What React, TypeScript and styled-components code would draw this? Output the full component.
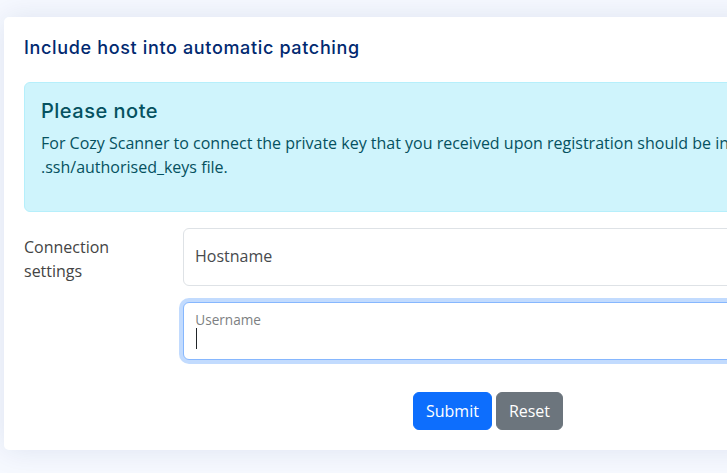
import { createGlobalStyle, styled } from "styled-components";

const GlobalStyle = createGlobalStyle`
  html, body {
    margin: 0;
    padding: 0;
    background: #f6f9ff;
    overflow: hidden;
  }
  body {
    font-family: "Open Sans", "Liberation Sans", sans-serif;
    color: #444444;
    font-size: 16px;
    line-height: 1.5;
  }
  * { box-sizing: border-box; }
`;

const Page = styled.main`
  padding: 17px 0 30px 4px;
`;

const Card = styled.section`
  width: 968px;
  background: #fff;
  border-radius: 5px;
  box-shadow: 0 0 30px rgba(1, 41, 112, 0.1);
  padding: 0 20px 20px;
`;

const CardTitle = styled.h5`
  margin: 0 0 8px;
  padding: 20px 0 15px;
  font-family: Inter, "Noto Sans", sans-serif;
  font-size: 18px;
  font-weight: 500;
  letter-spacing: 0.65px;
  line-height: 1.2;
  color: #012970;
`;

const Alert = styled.div`
  background: #cff4fc;
  border: 1px solid #b6effb;
  border-radius: 6px;
  color: #055160;
  padding: 16px;
  margin-bottom: 16px;
`;

const AlertHeading = styled.h4`
  margin: 0 0 8px;
  font-family: Inter, "Noto Sans", sans-serif;
  font-size: 20px;
  font-weight: 500;
  letter-spacing: 0.5px;
  line-height: 1.2;
`;

const AlertText = styled.p`
  margin: 0 0 16px;
  white-space: nowrap;
`;

const FormRow = styled.div`
  display: grid;
  grid-template-columns: 135px 1fr;
  column-gap: 24px;
  margin-bottom: 16px;
`;

const Label = styled.label`
  padding-top: 7px;
  line-height: 1.5;
  color: #444444;
`;

const Field = styled.div`
  position: relative;
`;

const Input = styled.input<{ $focused?: boolean }>`
  display: block;
  width: 100%;
  height: 58px;
  padding: 26px 12px 10px;
  font: inherit;
  color: #212529;
  background: #fff;
  border: 1px solid ${(p) => (p.$focused ? "#86b7fe" : "#dee2e6")};
  border-radius: 6px;
  outline: none;
  box-shadow: ${(p) =>
    p.$focused ? "0 0 0 4px rgba(13, 110, 253, 0.25)" : "none"};
`;

const FloatLabel = styled.span<{ $floated?: boolean }>`
  position: absolute;
  top: 0;
  left: 0;
  padding: 16px 12px;
  line-height: 1.5;
  color: ${(p) => (p.$floated ? "#7d7f82" : "#474a4d")};
  pointer-events: none;
  transform-origin: 0 0;
  transform: ${(p) =>
    p.$floated ? "scale(0.85) translateY(-7px) translateX(2.4px)" : "none"};
`;

const Caret = styled.span`
  position: absolute;
  left: 13px;
  top: 26px;
  width: 1px;
  height: 21px;
  background: #212529;
`;

const Actions = styled.div`
  display: flex;
  justify-content: center;
  gap: 4px;
  margin-top: 32px;
`;

const Button = styled.button<{ $variant: "primary" | "secondary" }>`
  font: inherit;
  line-height: 1.5;
  padding: 6px 12px;
  border-radius: 6px;
  color: #fff;
  cursor: pointer;
  background: ${(p) => (p.$variant === "primary" ? "#0d6efd" : "#6c757d")};
  border: 1px solid ${(p) => (p.$variant === "primary" ? "#0d6efd" : "#6c757d")};
`;

const App = () => {
  return (
    <>
      <GlobalStyle />
      <Page>
        <Card>
          <CardTitle>Include host into automatic patching</CardTitle>
          <Alert>
            <AlertHeading>Please note</AlertHeading>
            <AlertText>
              For Cozy Scanner to connect the private key that you received upon
              registration should be in the host's
              <br />
              .ssh/authorised_keys file.
            </AlertText>
          </Alert>
          <FormRow>
            <Label>Connection settings</Label>
            <Field>
              <Input />
              <FloatLabel>Hostname</FloatLabel>
            </Field>
          </FormRow>
          <FormRow>
            <span />
            <Field>
              <Input $focused />
              <FloatLabel $floated>Username</FloatLabel>
              <Caret />
            </Field>
          </FormRow>
          <Actions>
            <Button $variant="primary">Submit</Button>
            <Button $variant="secondary">Reset</Button>
          </Actions>
        </Card>
      </Page>
    </>
  );
};

export default App;
